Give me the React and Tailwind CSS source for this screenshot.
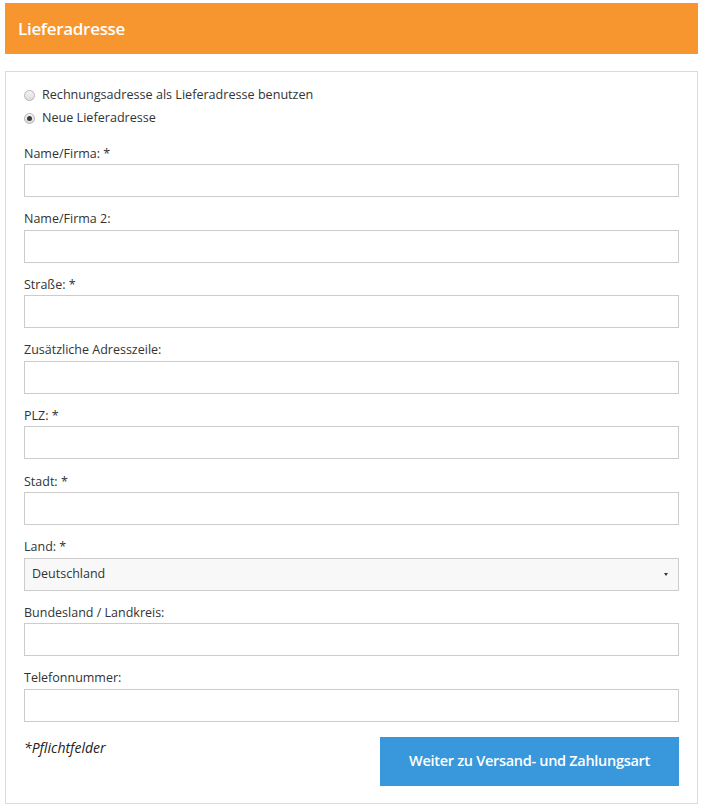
import React, { useState } from 'react';

const FIELDS = [
  { label: 'Name/Firma: *' },
  { label: 'Name/Firma 2:' },
  { label: 'Straße: *' },
  { label: 'Zusätzliche Adresszeile:' },
  { label: 'PLZ: *' },
  { label: 'Stadt: *' },
  { label: 'Land: *', select: true },
  { label: 'Bundesland / Landkreis:' },
  { label: 'Telefonnummer:' },
];

function Radio({ checked, label, onClick }) {
  return (
    <button type="button" onClick={onClick} className="flex items-center h-[23px] text-left">
      <span className="w-[11px] h-[11px] rounded-full border border-[#b5b5b5] bg-gradient-to-b from-[#f4f4f4] to-[#dcdcdc] flex items-center justify-center">
        {checked && <span className="w-[5px] h-[5px] rounded-full bg-[#3c3c3c]" />}
      </span>
      <span className="ml-[7px] text-[12.6px] text-[#333]">{label}</span>
    </button>
  );
}

export default function App() {
  const [mode, setMode] = useState('new');

  return (
    <div className="bg-white min-h-[808px] pt-[3px] font-['Open_Sans',sans-serif]">
      {/* Header */}
      <div className="ml-[5px] w-[693px] h-[51px] bg-[#f7952f] flex items-center px-[13px]">
        <h2 className="text-white text-[17px] font-semibold tracking-[-0.3px]">Lieferadresse</h2>
      </div>

      {/* Form panel */}
      <div className="ml-[5px] mt-[17px] w-[693px] border border-[#dcdcdc] px-[18px] pt-[12px] pb-[17px]">
        <div className="flex flex-col">
          <Radio checked={mode === 'billing'} label="Rechnungsadresse als Lieferadresse benutzen" onClick={() => setMode('billing')} />
          <Radio checked={mode === 'new'} label="Neue Lieferadresse" onClick={() => setMode('new')} />
        </div>

        <div className="mt-[14px]">
          {FIELDS.map((f, i) => (
            <div key={i} className={i < FIELDS.length - 1 ? 'mb-[12.6px]' : ''}>
              <div className="h-[20px] flex items-center text-[12.5px] text-[#333]">{f.label}</div>
              {f.select ? (
                <div className="h-[33px] border border-[#cccccc] bg-[#f8f8f8] flex items-center justify-between pl-[7px] pr-[10px] text-[12.5px] text-[#333]">
                  <span>Deutschland</span>
                  <span className="w-0 h-0 border-l-[2px] border-r-[2px] border-t-[3px] border-l-transparent border-r-transparent border-t-[#333]" />
                </div>
              ) : (
                <input type="text" className="block w-full h-[33px] border border-[#cccccc] bg-white px-[7px] text-[12.5px] outline-none" />
              )}
            </div>
          ))}
        </div>

        <div className="flex justify-between items-start mt-[15px]">
          <span className="italic text-[14px] text-[#222]">*Pflichtfelder</span>
          <button type="button" className="w-[299px] h-[49px] bg-[#3898db] text-white text-[14.5px] font-semibold tracking-[-0.3px]">
            Weiter zu Versand- und Zahlungsart
          </button>
        </div>
      </div>
    </div>
  );
}
